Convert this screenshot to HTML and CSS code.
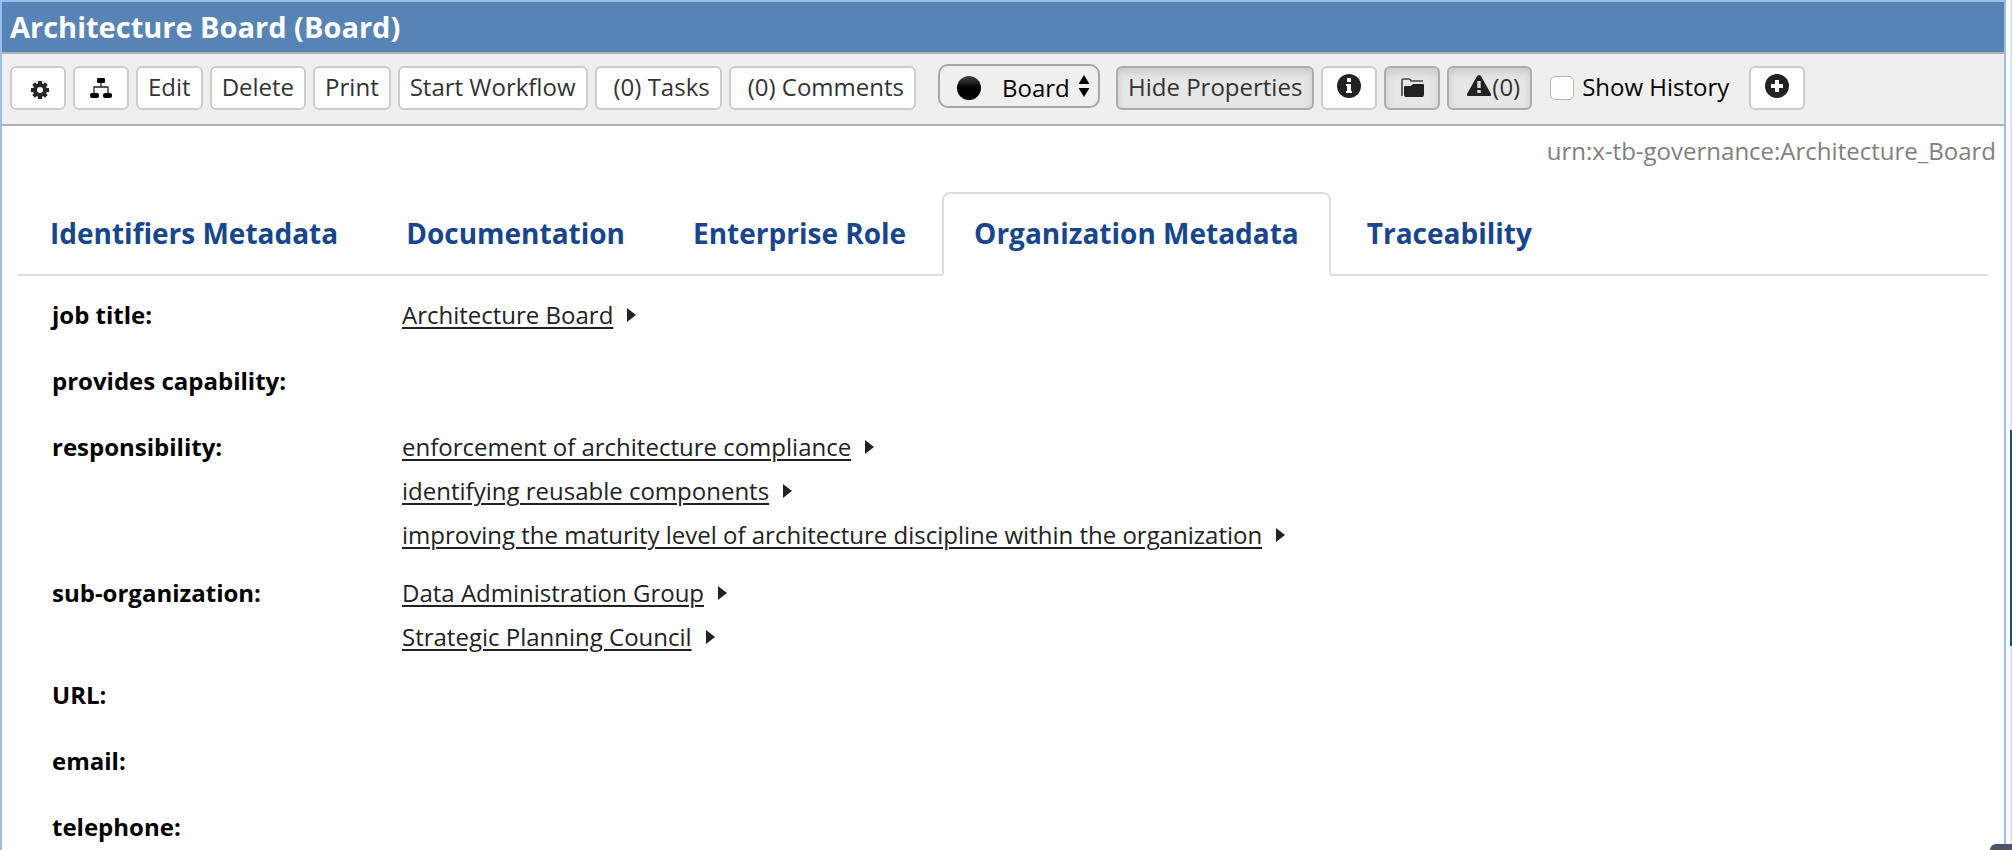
FILE: index.html
```html
<!DOCTYPE html>
<html lang="en">
<head>
<meta charset="utf-8">
<title>Architecture Board (Board)</title>
<link rel="stylesheet" href="styles.css">
</head>
<body>
<div class="workspace">
  <main class="panel">
    <h1 class="panel-title">Architecture Board (Board)</h1>
    <div class="toolbar">
      <div class="group">
        <button class="btn btn-icon" type="button" aria-label="Settings">
          <svg class="gear" width="24" height="24" viewBox="0 0 24 24"><g fill="#262626"><circle cx="12" cy="12" r="7"/><path d="M10 3h4v18h-4zM3 10h18v4H3z"/><path d="M10 3h4v18h-4zM3 10h18v4H3z" transform="rotate(45 12 12)"/></g><circle cx="12" cy="12" r="3" fill="#fff"/></svg>
        </button>
        <button class="btn btn-icon" type="button" aria-label="Hierarchy">
          <svg width="24" height="24" viewBox="0 0 24 24"><g fill="#000"><rect x="8" y="3" width="8" height="5" rx="1"/><rect x="1" y="18" width="9" height="5" rx="2"/><rect x="14" y="18" width="9" height="5" rx="2"/></g><path d="M12 8v4M5 18v-6h14v6" fill="none" stroke="#222" stroke-width="1.3"/></svg>
        </button>
        <button class="btn" type="button">Edit</button>
        <button class="btn" type="button">Delete</button>
        <button class="btn" type="button">Print</button>
        <button class="btn" type="button">Start Workflow</button>
        <button class="btn btn-count" type="button">(0) Tasks</button>
        <button class="btn btn-count" type="button">(0) Comments</button>
      </div>
      <div class="picker">
        <span class="picker-dot"></span>
        <select class="picker-select" aria-label="Type"><option>Board</option></select>
        <svg class="picker-arrows" width="12" height="22" viewBox="0 0 12 22"><path d="M6 0l5.500 9H.5zM6 22L.5 13h11z"/></svg>
      </div>
      <div class="group">
        <button class="btn pressed" type="button" aria-pressed="true">Hide Properties</button>
        <button class="btn btn-icon" type="button" aria-label="Information">
          <svg width="26" height="26" viewBox="0 0 26 26"><circle cx="13" cy="12" r="12" fill="#222"/><path fill="#fff" d="M11 4h4v4h-4zM10 10h5v7h1v2h-6v-2h1v-5h-1z"/></svg>
        </button>
        <button class="btn btn-icon pressed" type="button" aria-label="Folder" aria-pressed="true">
          <svg width="26" height="26" viewBox="0 0 26 26"><path d="M3 22V6.500Q3 5 4.500 5H10q1.500 0 2 2h12" fill="none" stroke="#444" stroke-width="1.6"/><path fill="#222" d="M5 13q0-1 1-1h5q1 0 2-1l1-1h10q1 0 1 1v10q0 2-2 2H7q-2 0-2-2z"/></svg>
        </button>
        <button class="btn btn-warn pressed" type="button" aria-pressed="true"><svg width="26" height="26" viewBox="0 0 26 26"><path fill="#222" d="M13 1q1.500 0 2.500 2L25 20q.5 2-1 2H2q-1.500 0-1-2L10.500 3Q11.500 1 13 1z"/><path fill="#ddd" d="M11.300 7h3.400v7h-3.400zM11.300 16h3.400v3h-3.400z"/></svg>(0)</button>
      </div>
      <label class="history"><input class="history-box" type="checkbox">Show History</label>
      <button class="btn btn-icon" type="button" aria-label="Add">
        <svg width="26" height="26" viewBox="0 0 26 26"><circle cx="13" cy="12" r="12" fill="#222"/><path fill="#fff" d="M11 6h4v4h4v4h-4v4h-4v-4H7v-4h4z"/></svg>
      </button>
    </div>
    <p class="urn">urn:x-tb-governance:Architecture_Board</p>
    <nav class="tabs">
      <a class="tab" href="#identifiers">Identifiers Metadata</a>
      <a class="tab" href="#documentation">Documentation</a>
      <a class="tab" href="#role">Enterprise Role</a>
      <a class="tab active" href="#organization">Organization Metadata</a>
      <a class="tab" href="#traceability">Traceability</a>
    </nav>
    <dl class="fields">
      <div class="field"><dt>job title:</dt><dd><div class="value"><a href="#v1">Architecture Board</a><i class="caret"></i></div></dd></div>
      <div class="field"><dt>provides capability:</dt></div>
      <div class="field"><dt>responsibility:</dt><dd>
        <div class="value"><a href="#v2">enforcement of architecture compliance</a><i class="caret"></i></div>
        <div class="value"><a href="#v3">identifying reusable components</a><i class="caret"></i></div>
        <div class="value"><a href="#v4">improving the maturity level of architecture discipline within the organization</a><i class="caret"></i></div>
      </dd></div>
      <div class="field"><dt>sub-organization:</dt><dd>
        <div class="value"><a href="#v5">Data Administration Group</a><i class="caret"></i></div>
        <div class="value"><a href="#v6">Strategic Planning Council</a><i class="caret"></i></div>
      </dd></div>
      <div class="field"><dt>URL:</dt></div>
      <div class="field"><dt>email:</dt></div>
      <div class="field"><dt>telephone:</dt></div>
    </dl>
  </main>
  <div class="rail"><div class="rail-thumb"></div></div>
  <div class="corner"></div>
</div>
</body>
</html>
```
FILE: styles.css
```css
* {
  box-sizing: border-box;
}

body {
  margin: 0;
  background: #fff;
  color: #000;
  font-family: "Open Sans", sans-serif;
  font-size: 24px;
  line-height: 32px;
}

.workspace {
  position: relative;
  display: flex;
  gap: 4px;
  height: 100vh;
  overflow: hidden;
}

.panel {
  flex: 1;
  min-width: 0;
  border: 2px solid #9bbcec;
  border-bottom: 0;
}

.panel-title {
  margin: 0;
  padding: 8px;
  border-bottom: 2px solid #b0b0b0;
  background: #5884b5;
  color: #fff;
  font-size: 29px;
  font-weight: 700;
  line-height: 34px;
}

.toolbar {
  display: flex;
  align-items: center;
  gap: 18px;
  padding: 12px 8px 14px;
  border-bottom: 2px solid #b0b0b0;
  background: #efefef;
}

.group {
  display: flex;
  gap: 7px;
}

.btn {
  display: flex;
  align-items: center;
  justify-content: center;
  height: 44px;
  padding: 0 10px 2px;
  border: 2px solid #ccc;
  border-radius: 6px;
  background: #fff;
  color: #333;
  font: inherit;
  white-space: nowrap;
}

.btn-icon {
  width: 56px;
  padding: 0 0 2px;
}

.btn-count {
  padding-left: 17px;
}

.btn-warn {
  padding-left: 17px;
}

.gear {
  margin: 6px 0 0 4px;
}

.pressed {
  border-color: #adadad;
  background: #e6e6e6;
  box-shadow: inset 0 4px 8px rgba(0, 0, 0, 0.13);
}

.picker {
  position: relative;
  align-self: flex-start;
  margin: -2px -2px 0 4px;
}

.picker-select {
  display: block;
  width: 162px;
  height: 44px;
  padding: 4px 16px 0 62px;
  border: 2px solid #a6a6a6;
  border-radius: 10px;
  background: #efefef;
  color: #000;
  font: inherit;
  appearance: none;
}

.picker-dot {
  position: absolute;
  top: 12px;
  left: 19px;
  width: 24px;
  height: 24px;
  border-radius: 50%;
  background: linear-gradient(#444, #000 50%);
}

.picker-arrows {
  position: absolute;
  top: 11px;
  right: 10px;
}

.history {
  display: flex;
  align-items: center;
  gap: 8px;
  margin-right: 2px;
  padding-bottom: 2px;
}

.history-box {
  width: 24px;
  height: 24px;
  margin: 2px 0 0;
  border: 1px solid #b5b5b5;
  border-radius: 5px;
  background: #fff;
  appearance: none;
}

.urn {
  margin: 9px 8px 25px;
  color: #808080;
  text-align: right;
}

.tabs {
  display: flex;
  gap: 4px;
  margin: 0 16px;
  border-bottom: 2px solid #ddd;
}

.tab {
  margin-bottom: -2px;
  padding: 21px 30px 23px;
  border: 2px solid transparent;
  color: #17468f;
  font-size: 28px;
  font-weight: 700;
  line-height: 36px;
  text-decoration: none;
  white-space: nowrap;
}

.active {
  border-color: #ddd #ddd #fff;
  border-radius: 8px 8px 0 0;
  background: #fff;
}

.fields {
  margin: 6px 16px 0;
}

.field {
  display: flex;
  min-height: 66px;
  padding: 11px 0 3px;
  line-height: 44px;
}

dt {
  width: 384px;
  padding-left: 34px;
  font-weight: 700;
}

dd {
  margin: 0;
}

.value {
  display: flex;
  align-items: center;
  gap: 14px;
}

.value a {
  color: #222;
  text-decoration-thickness: 2px;
  text-underline-offset: 3px;
}

.caret {
  border: 7px solid transparent;
  border-right: 0;
  border-left: 9px solid #222;
}

.rail {
  width: 2px;
  padding-top: 430px;
  background: #dde8f5;
}

.rail-thumb {
  height: 216px;
  background: #1f4e79;
}

.corner {
  position: absolute;
  right: 0;
  bottom: 0;
  width: 22px;
  height: 6px;
  border-top-left-radius: 8px;
  background: #4a5568;
}
```
